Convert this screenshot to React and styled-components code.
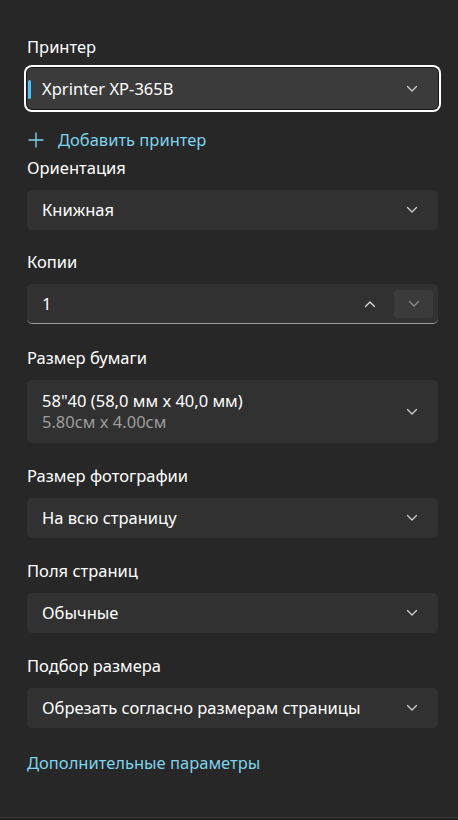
import React from "react";
import styled, { createGlobalStyle } from "styled-components";

const GlobalStyle = createGlobalStyle`
  html, body { margin: 0; padding: 0; background: #272727; }
  body { font-family: "Noto Sans", "Segoe UI", sans-serif; -webkit-font-smoothing: antialiased; }
  * { box-sizing: border-box; }
`;

const Page = styled.div`
  width: 458px;
  height: 820px;
  background: #272727;
  display: flex;
  flex-direction: column;
  padding: 37px 20px 0 27px;
  position: relative;
  overflow: hidden;
`;

const Field = styled.div`
  display: flex;
  flex-direction: column;
  margin-top: ${(p) => p.$mt || 0}px;
`;

const Label = styled.div`
  color: #ffffff;
  font-size: 16.5px;
  line-height: 20px;
  height: 20px;
  margin-bottom: ${(p) => p.$mb || 12}px;
  white-space: nowrap;
`;

const Select = styled.div`
  position: relative;
  height: ${(p) => p.$h || 40}px;
  border-radius: 5px;
  background: ${(p) => (p.$focused ? "#3b3b3b" : "#313131")};
  display: flex;
  align-items: center;
  justify-content: space-between;
  padding: 0 20px 0 15px;
  color: #ffffff;
  font-size: 16.5px;
  box-shadow: ${(p) =>
    p.$focused ? "0 0 0 1px #161616, 0 0 0 3px #ffffff" : "none"};
`;

const Accent = styled.span`
  position: absolute;
  left: 1px;
  top: 12px;
  width: 3px;
  height: 19px;
  border-radius: 2px;
  background: #4cc2ff;
`;

const Value = styled.div`
  display: flex;
  flex-direction: column;
  white-space: nowrap;
`;

const Line = styled.span`
  line-height: ${(p) => p.$lh || 20}px;
  color: ${(p) => p.$color || "#ffffff"};
`;

const AddRow = styled.div`
  display: flex;
  align-items: center;
  gap: 14px;
  height: 20px;
  margin-top: 21px;
  padding-left: 1px;
  color: #7fd3ec;
  font-size: 16.5px;
  line-height: 20px;
`;

const Copies = styled.div`
  height: 40px;
  border-radius: 5px;
  background: #313131;
  border-bottom: 1px solid #9c9c9c;
  display: flex;
  align-items: center;
  gap: 5px;
  padding: 0 5px 0 15px;
  color: #ffffff;
  font-size: 16.5px;
`;

const CopiesValue = styled.span`
  flex: 1;
  line-height: 20px;
`;

const SpinButton = styled.div`
  width: 39px;
  height: 28px;
  border-radius: 4px;
  display: flex;
  align-items: center;
  justify-content: center;
  background: ${(p) => (p.$active ? "#3b3b3b" : "transparent")};
`;

const Link = styled.div`
  margin-top: 25px;
  color: #7fd3ec;
  font-size: 16.5px;
  line-height: 20px;
`;

const Footer = styled.div`
  position: absolute;
  left: 0;
  right: 0;
  top: 817px;
  height: 3px;
  border-top: 1px solid #3c3c3c;
  background: #202020;
`;

const Chevron = ({ up, color = "#cfcfcf" }) => (
  <svg width="12" height="8" viewBox="0 0 12 8" fill="none">
    <path
      d={up ? "M1.5 6.5 L6 2 L10.5 6.5" : "M1.5 1.5 L6 6 L10.5 1.5"}
      stroke={color}
      strokeWidth="1.3"
      strokeLinecap="round"
      strokeLinejoin="round"
    />
  </svg>
);

const Plus = () => (
  <svg width="16" height="16" viewBox="0 0 16 16" fill="none">
    <path d="M8 1 V15 M1 8 H15" stroke="#7fd3ec" strokeWidth="1.4" strokeLinecap="round" />
  </svg>
);

const SelectField = ({ label, mt, value, sub }) => (
  <Field $mt={mt}>
    <Label>{label}</Label>
    <Select $h={sub ? 63 : 40}>
      <Value>
        <Line $lh={sub ? 21 : 20}>{value}</Line>
        {sub && <Line $lh={22} $color="#9d9d9d">{sub}</Line>}
      </Value>
      <Chevron />
    </Select>
  </Field>
);

export default function App() {
  return (
    <>
      <GlobalStyle />
      <Page>
        <Field>
          <Label $mb={11}>Принтер</Label>
          <Select $focused $h={41}>
            <Accent />
            <Value>
              <Line>Xprinter XP-365B</Line>
            </Value>
            <Chevron />
          </Select>
        </Field>
        <AddRow>
          <Plus />
          <span>Добавить принтер</span>
        </AddRow>
        <SelectField label="Ориентация" mt={8} value="Книжная" />
        <Field $mt={22}>
          <Label>Копии</Label>
          <Copies>
            <CopiesValue>1</CopiesValue>
            <SpinButton>
              <Chevron up color="#e0e0e0" />
            </SpinButton>
            <SpinButton $active>
              <Chevron color="#8a8a8a" />
            </SpinButton>
          </Copies>
        </Field>
        <SelectField
          label="Размер бумаги"
          mt={24}
          value={'58"40 (58,0 мм x 40,0 мм)'}
          sub="5.80см x 4.00см"
        />
        <SelectField label="Размер фотографии" mt={23} value="На всю страницу" />
        <SelectField label="Поля страниц" mt={23} value="Обычные" />
        <SelectField
          label="Подбор размера"
          mt={23}
          value="Обрезать согласно размерам страницы"
        />
        <Link>Дополнительные параметры</Link>
        <Footer />
      </Page>
    </>
  );
}
